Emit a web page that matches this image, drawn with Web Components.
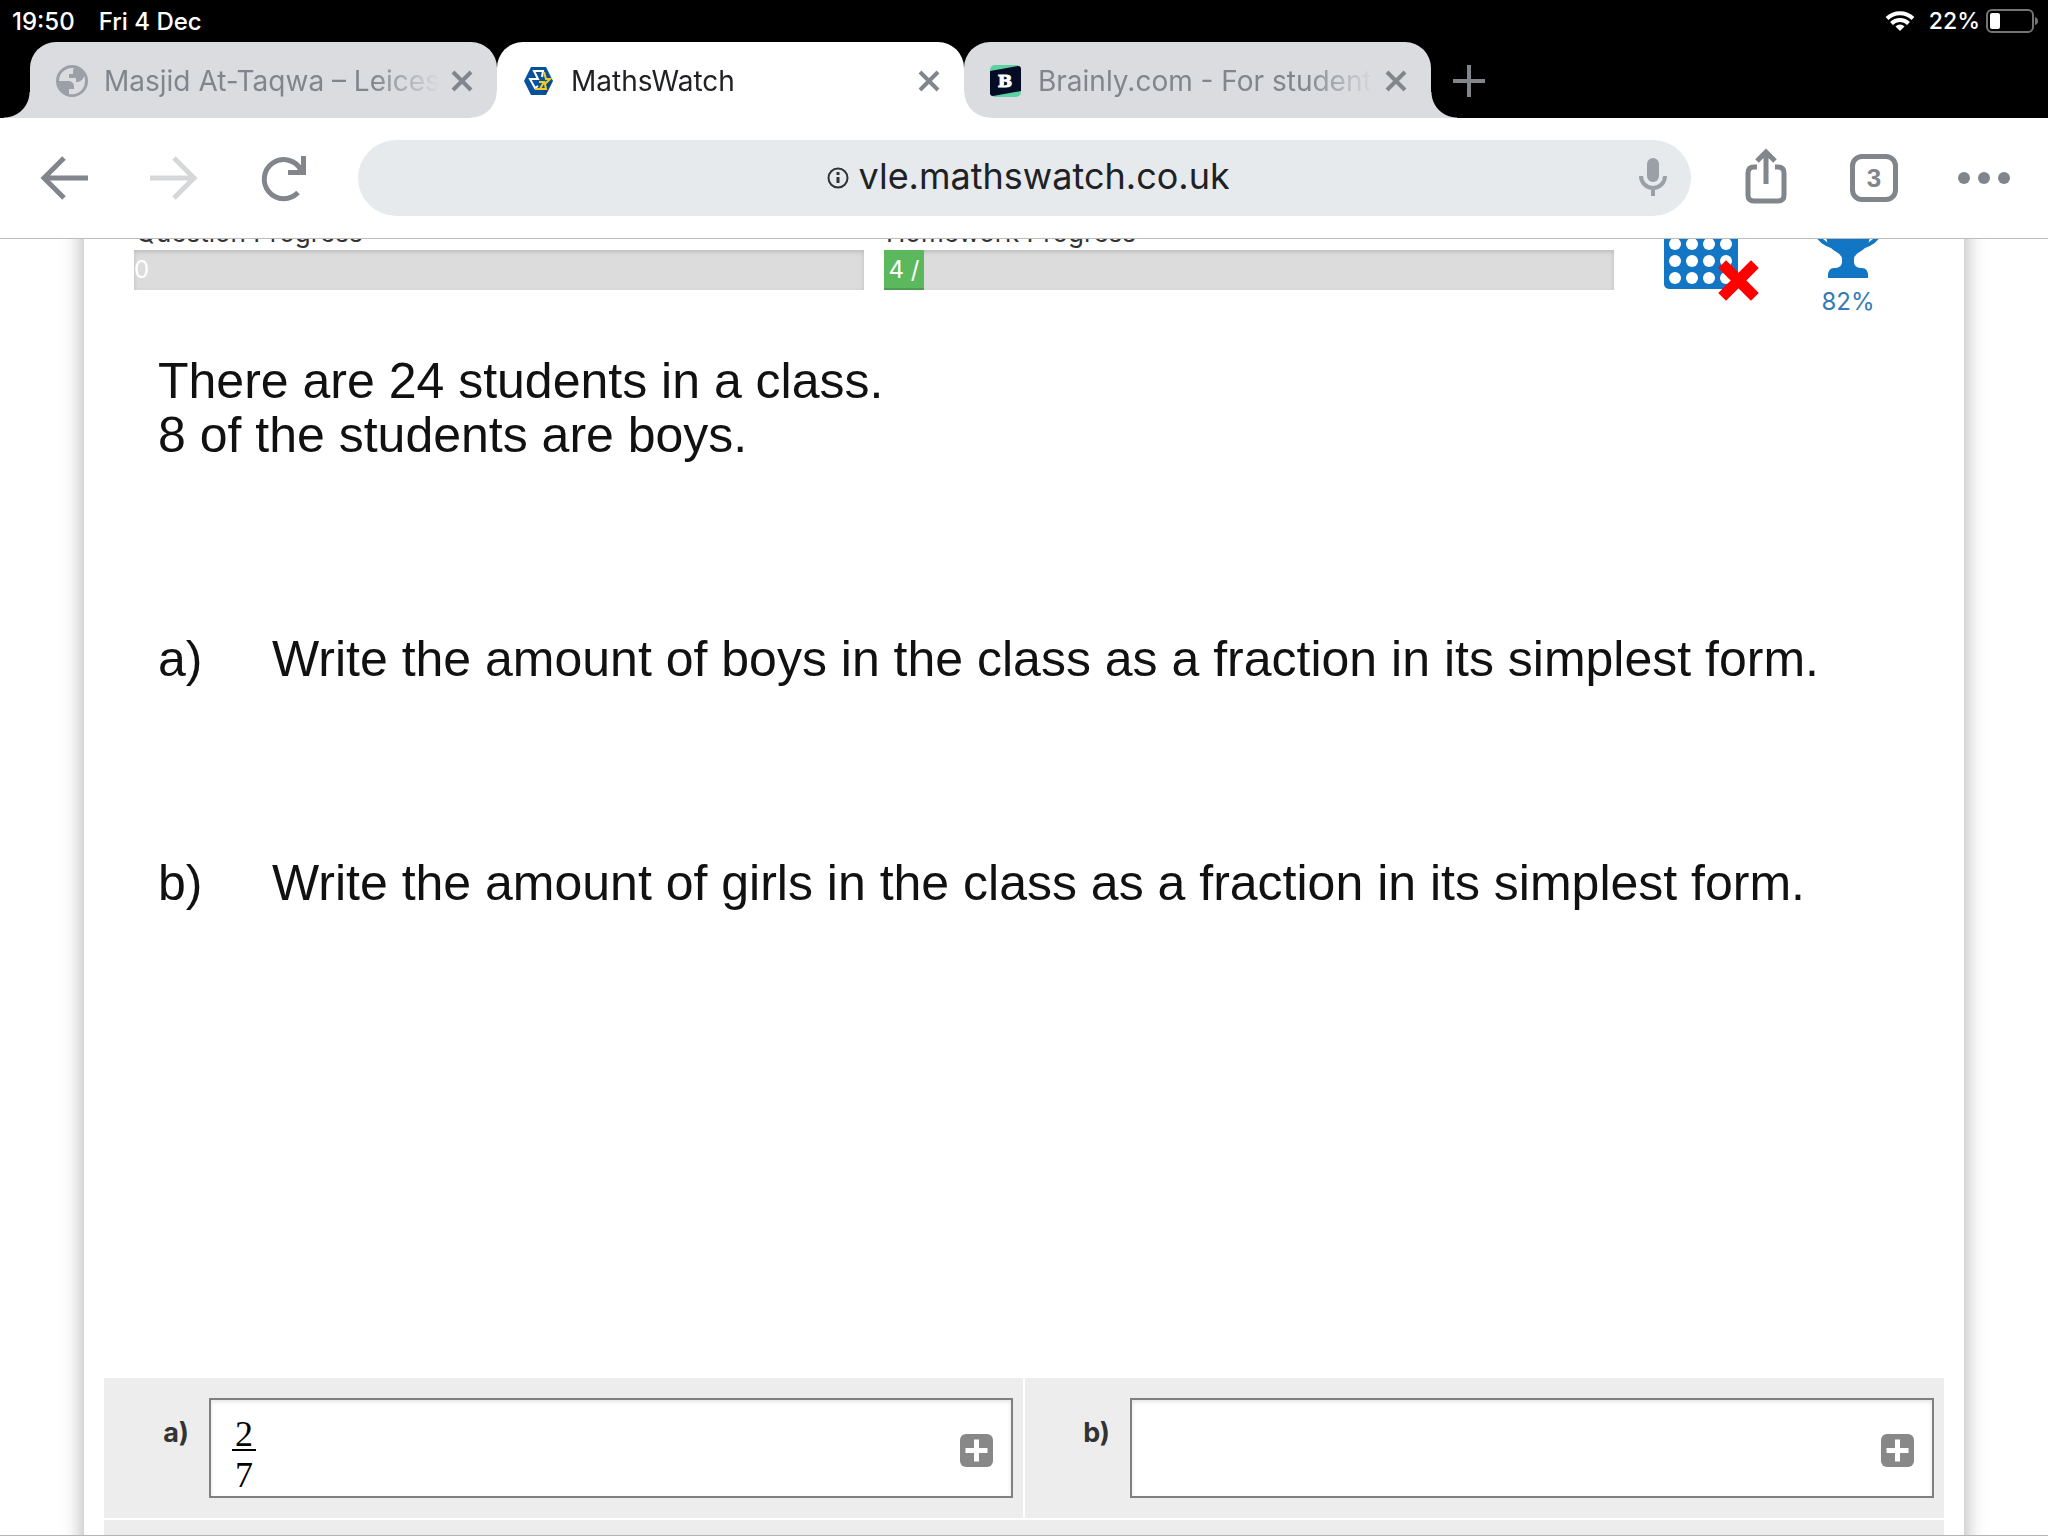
<!DOCTYPE html>
<html lang="en">
<head>
<meta charset="utf-8">
<meta name="viewport" content="width=device-width, initial-scale=1">
<title>MathsWatch</title>
<style>
  body {
    margin: 0;
    height: 100vh;
    display: flex;
    flex-direction: column;
    overflow: hidden;
    background: #fff;
    font-family: Inter, "Liberation Sans", sans-serif;
    color: #202124;
  }
</style>
</head>
<body>
  <status-bar time="19:50" date="Fri 4 Dec" battery="22"></status-bar>

  <tab-strip>
    <browser-tab label="Masjid At-Taqwa – Leices">
      <svg slot="icon" viewBox="0 0 32 32" width="32" height="32">
        <circle cx="16" cy="16" r="16" fill="#9aa0a6"/>
        <path d="M16 3a13 13 0 0 0-13 13h9c3 0 6 2 6 5v3h-5v5a13 13 0 0 0 16-13c0-2 0-3-1-5-1 4-4 6-8 6v-4h-7v-4h4V5l1-2z" fill="#dadce0"/>
      </svg>
    </browser-tab>
    <browser-tab label="MathsWatch" active>
      <svg slot="icon" viewBox="0 0 32 32" width="32" height="32">
        <path d="M8 2h15l7 14-7 14H8L1 16z" fill="#07529b"/>
        <path d="M20 28l4-11 4 1-5 10z" fill="#0a4780"/>
        <path d="M19 12l1-6h-9l4 8H7l5 9 3-2" fill="none" stroke="#fff" stroke-width="2"/>
        <path d="M21 7l2 7h4l-5 5 1 5H12M16 17h5l-4 7" fill="none" stroke="#f5cb24" stroke-width="2"/>
      </svg>
    </browser-tab>
    <browser-tab label="Brainly.com - For student">
      <svg slot="icon" viewBox="0 0 32 32" width="32" height="32">
        <rect y="0" width="31" height="32" rx="5" fill="#5ed1a3"/>
        <path d="M0 6L28 1q3 0 3 3v22L3 31q-3 0-3-3z" fill="#040b24"/>
        <text x="15" y="22" text-anchor="middle" font-family="DejaVu Serif, serif" font-weight="bold" font-size="17" fill="#fff" stroke="#fff">B</text>
      </svg>
    </browser-tab>
  </tab-strip>

  <browser-toolbar url="vle.mathswatch.co.uk" tabs="3"></browser-toolbar>

  <page-view>
    <page-header score="82%">
      <progress-meter label="Question Progress" text="0" value="0"></progress-meter>
      <progress-meter label="Homework Progress" text="4 /" value="5.5"></progress-meter>
    </page-header>

    <question-sheet>
      <span slot="intro">There are 24 students in a class.<br>8 of the students are boys.</span>
      <question-part name="a)">Write the amount of boys in the class as a fraction in its simplest form.</question-part>
      <question-part name="b)">Write the amount of girls in the class as a fraction in its simplest form.</question-part>
    </question-sheet>

    <answer-grid>
      <answer-field label="a)"><math-fraction top="2" bottom="7"></math-fraction></answer-field>
      <answer-field label="b)"></answer-field>
    </answer-grid>
  </page-view>

<script>
class StatusBar extends HTMLElement {
  constructor() {
    super();
    this.attachShadow({ mode: "open" });
    const level = this.getAttribute("battery");
    this.shadowRoot.innerHTML = `
    <style>
      :host {
        display: flex;
        align-items: center;
        gap: 24px;
        height: 42px;
        padding: 0 10px 0 12px;
        background: #000;
        color: #fff;
        font-size: 24px;
        font-weight: 500;
        box-sizing: border-box;
      }
      .right {
        display: flex;
        align-items: center;
        margin-left: auto;
      }
      .percent { margin: 0 6px 0 14px; font-size: 23px; }
      svg { display: block; }
    </style>
    <span>${this.getAttribute("time")}</span>
    <span>${this.getAttribute("date")}</span>
    <div class="right">
      <svg viewBox="0 0 30 22" width="30" height="22">
        <g fill="none" stroke="#fff" stroke-width="4">
          <path d="M2 8.500a18.500 18.500 0 0 1 26 0"/>
          <path d="M6.500 13.500a12 12 0 0 1 17 0"/>
        </g>
        <path d="M15 21l-4.500-4.600a6.500 6.500 0 0 1 9 0z" fill="#fff"/>
      </svg>
      <span class="percent">${level}%</span>
      <svg viewBox="0 0 52 24" width="52" height="24">
        <rect x="1" y="1" width="46" height="22" rx="5" fill="none" stroke="#757575" stroke-width="2"/>
        <rect x="4" y="4" width="10" height="16" rx="2" fill="#fff"/>
        <path d="M49 8q3 1 3 4t-3 4z" fill="#757575"/>
      </svg>
    </div>
    `;
  }
}
customElements.define("status-bar", StatusBar);

class TabStrip extends HTMLElement {
  constructor() {
    super();
    this.attachShadow({ mode: "open" });
    this.shadowRoot.innerHTML = `
    <style>
      :host {
        display: flex;
        height: 76px;
        padding-left: 30px;
        background: #000;
      }
      button {
        display: flex;
        align-items: center;
        padding: 2px 22px 0;
        border: 0;
        background: none;
      }
    </style>
    <slot></slot>
    <button aria-label="New tab">
      <svg viewBox="0 0 32 32" width="32" height="32"><path d="M16 0v32M0 16h32" stroke="#80868b" stroke-width="4"/></svg>
    </button>
    `;
  }
}
customElements.define("tab-strip", TabStrip);

class BrowserTab extends HTMLElement {
  constructor() {
    super();
    this.attachShadow({ mode: "open" });
    this.shadowRoot.innerHTML = `
    <style>
      :host {
        --tab-color: #dadce0;
        display: flex;
        align-items: center;
        position: relative;
        flex: 0 1 467px;
        min-width: 0;
        padding: 2px 21px 0 26px;
        box-sizing: border-box;
        border-radius: 26px 26px 0 0;
        background: var(--tab-color);
        color: #80868b;
      }
      :host([active]) {
        --tab-color: #fff;
        z-index: 1;
        color: #202124;
      }
      /* curved feet on both sides of the tab */
      :host::before, :host::after {
        content: "";
        position: absolute;
        bottom: 0;
        width: 26px;
        height: 26px;
      }
      :host::before {
        right: 100%;
        background: radial-gradient(circle at 0 0, transparent 25px, var(--tab-color) 26px);
      }
      :host::after {
        left: 100%;
        background: radial-gradient(circle at 100% 0, transparent 25px, var(--tab-color) 26px);
      }
      button {
        border: 0;
        padding: 0;
        background: none;
        font: inherit;
        color: inherit;
        display: flex;
        align-items: center;
      }
      .select {
        flex: 1;
        min-width: 0;
        gap: 16px;
      }
      .title {
        flex: 1;
        overflow: hidden;
        white-space: nowrap;
        text-align: left;
        font-size: 28px;
        line-height: 40px;
        -webkit-mask-image: linear-gradient(to left, transparent, #000 68px);
        mask-image: linear-gradient(to left, transparent, #000 68px);
      }
      .close { margin-left: 8px; }
    </style>
    <button class="select"><slot name="icon"></slot><span class="title">${this.getAttribute("label")}</span></button>
    <button class="close" aria-label="Close tab">
      <svg viewBox="0 0 28 28" width="28" height="28"><path d="M5 5l18 18M23 5L5 23" stroke="#80868b" stroke-width="4"/></svg>
    </button>
    `;
  }
}
customElements.define("browser-tab", BrowserTab);

class BrowserToolbar extends HTMLElement {
  constructor() {
    super();
    this.attachShadow({ mode: "open" });
    this.shadowRoot.innerHTML = `
    <style>
      :host {
        display: flex;
        align-items: center;
        height: 121px;
        padding: 0 38px 0 40px;
        box-sizing: border-box;
        border-bottom: 1px solid #bcbcbc;
        background: #fff;
      }
      button {
        display: flex;
        align-items: center;
        justify-content: center;
        flex: none;
        padding: 0;
        border: 0;
        background: none;
        color: #80868b;
      }
      .nav {
        display: flex;
        gap: 62px;
        margin-right: 50px;
      }
      .omnibox {
        flex: 1;
        display: flex;
        align-items: center;
        height: 76px;
        padding: 0 22px 0 60px;
        border-radius: 38px;
        background: #e6eaed;
      }
      .address {
        flex: 1;
        display: flex;
        align-items: center;
        justify-content: center;
        gap: 10px;
      }
      input {
        width: 370px;
        padding: 0 0 4px;
        border: 0;
        outline: 0;
        background: none;
        font: 36px Inter, sans-serif;
        color: #202124;
      }
      .actions {
        display: flex;
        align-items: center;
        gap: 60px;
        margin-left: 51px;
      }
      .share { padding-bottom: 4px; }
      .count {
        width: 48px;
        height: 48px;
        box-sizing: border-box;
        border: 5px solid #80868b;
        border-radius: 12px;
        font: bold 26px "Liberation Sans", sans-serif;
      }
    </style>
    <div class="nav">
      <button aria-label="Back">
        <svg viewBox="0 0 48 48" width="48" height="48"><path d="M48 24H4M24 4L4 24l20 20" fill="none" stroke="currentColor" stroke-width="5"/></svg>
      </button>
      <button aria-label="Forward" disabled>
        <svg viewBox="0 0 48 48" width="48" height="48"><path d="M0 24h44M24 4l20 20-20 20" fill="none" stroke="#d6d7d8" stroke-width="5"/></svg>
      </button>
      <button aria-label="Reload">
        <svg viewBox="0 0 48 48" width="48" height="48"><path d="M38 38.500A19.500 19.500 0 1 1 41 16" fill="none" stroke="currentColor" stroke-width="5"/><path d="M43.500 2v16.500H28" fill="none" stroke="currentColor" stroke-width="5"/></svg>
      </button>
    </div>
    <div class="omnibox">
      <div class="address">
        <svg viewBox="0 0 22 22" width="22" height="22"><circle cx="11" cy="11" r="9.500" fill="none" stroke="#303236" stroke-width="2"/><path d="M11 10v6M11 5v3" stroke="#303236" stroke-width="3"/></svg>
        <input type="text" aria-label="Address" value="${this.getAttribute("url")}">
      </div>
      <button aria-label="Voice search">
        <svg viewBox="0 0 32 40" width="32" height="40"><rect x="10" y="0" width="12" height="24" rx="6" fill="#9aa0a6"/><path d="M4 18a12 12 0 0 0 24 0M16 30v8" fill="none" stroke="#9aa0a6" stroke-width="4"/></svg>
      </button>
    </div>
    <div class="actions">
      <button class="share" aria-label="Share">
        <svg viewBox="0 0 48 56" width="48" height="56"><path d="M15 19H12q-6 0-6 6v22q0 6 6 6h24q6 0 6-6V25q0-6-6-6h-3M24 36V5M15 13l9-9 9 9" fill="none" stroke="currentColor" stroke-width="5"/></svg>
      </button>
      <button class="count" aria-label="Open tabs">${this.getAttribute("tabs")}</button>
      <button aria-label="Menu">
        <svg viewBox="0 0 52 12" width="52" height="12" fill="currentColor"><circle cx="6" cy="6" r="6"/><circle cx="26" cy="6" r="6"/><circle cx="46" cy="6" r="6"/></svg>
      </button>
    </div>
    `;
  }
}
customElements.define("browser-toolbar", BrowserToolbar);

class PageView extends HTMLElement {
  constructor() {
    super();
    this.attachShadow({ mode: "open" });
    this.shadowRoot.innerHTML = `
    <style>
      :host {
        flex: 1;
        display: block;
        min-height: 0;
        overflow: hidden;
        border-bottom: 1px solid #b4b4b4;
      }
      /* the page is scrolled down a little under the toolbar */
      main {
        min-height: 100%;
        margin: -40px 84px 0;
        box-shadow: 0 0 20px rgba(0, 0, 0, 0.35);
        background: #fff;
      }
    </style>
    <main><slot></slot></main>
    `;
  }
}
customElements.define("page-view", PageView);

class PageHeader extends HTMLElement {
  constructor() {
    super();
    this.attachShadow({ mode: "open" });
    this.shadowRoot.innerHTML = `
    <style>
      :host {
        display: flex;
        align-items: flex-start;
        gap: 20px;
        padding: 0 72px 0 50px;
      }
      .tools {
        display: flex;
        gap: 42px;
        margin-left: 28px;
      }
      a {
        display: flex;
        flex-direction: column;
        align-items: center;
        font-size: 24px;
        line-height: 28px;
        color: #337ab7;
        text-decoration: none;
      }
      svg { display: block; }
      .score svg { margin-bottom: 10px; }
    </style>
    <slot></slot>
    <div class="tools">
      <a href="#" aria-label="Calculator not allowed">
        <svg viewBox="0 0 100 104" width="100" height="104">
          <rect x="2" y="0" width="74" height="90" rx="5" fill="#1276c4"/>
          <g fill="#fff">
            <rect x="9" y="8" width="60" height="24"/>
            <circle cx="13" cy="45" r="6"/><circle cx="30" cy="45" r="6"/><circle cx="47" cy="45" r="6"/><circle cx="64" cy="45" r="6"/>
            <circle cx="13" cy="62" r="6"/><circle cx="30" cy="62" r="6"/><circle cx="47" cy="62" r="6"/><circle cx="64" cy="62" r="6"/>
            <circle cx="13" cy="79" r="6"/><circle cx="30" cy="79" r="6"/><circle cx="47" cy="79" r="6"/><circle cx="64" cy="79" r="6"/>
          </g>
          <path d="M64 69l25 25M89 69L64 94" stroke="#f00" stroke-width="11" stroke-linecap="square"/>
        </svg>
      </a>
      <a class="score" href="#">
        <svg viewBox="0 0 88 79" width="88" height="79" fill="#1276c4">
          <path d="M22 4h44v32q0 12-12 18-4 3-4 6v3q0 5 6 6h2q6 0 6 8v2H24v-2q0-8 6-8h2q6-1 6-6v-3q0-3-4-6-12-6-12-18z"/>
          <path d="M22 14H8q0 32 28 35M66 14h14q0 32-28 35" fill="none" stroke="#1276c4" stroke-width="4"/>
        </svg>
        ${this.getAttribute("score")}
      </a>
    </div>
    `;
  }
}
customElements.define("page-header", PageHeader);

class ProgressMeter extends HTMLElement {
  constructor() {
    super();
    this.attachShadow({ mode: "open" });
    const value = this.getAttribute("value");
    this.shadowRoot.innerHTML = `
    <style>
      :host {
        flex: 1;
        display: block;
        min-width: 0;
        color: #333;
      }
      .label {
        display: block;
        height: 51px;
        padding: 16px 0 0 2px;
        box-sizing: border-box;
        font-size: 26px;
        line-height: 36px;
      }
      .track {
        height: 40px;
        background: #dcdcdc;
        box-shadow: inset 0 2px 4px rgba(0, 0, 0, 0.15);
      }
      .fill {
        height: 40px;
        font-size: 24px;
        line-height: 40px;
        text-align: center;
        white-space: nowrap;
        color: #fff;
      }
      .fill.on {
        background: #5cb85c;
        box-shadow: inset 0 -2px 0 rgba(0, 0, 0, 0.15);
      }
    </style>
    <span class="label" id="label">${this.getAttribute("label")}</span>
    <div class="track" role="progressbar" aria-labelledby="label" aria-valuenow="${value}">
      <div class="fill ${value > 0 ? "on" : ""}" style="width: ${value > 0 ? value + "%" : "14px"}">${this.getAttribute("text")}</div>
    </div>
    `;
  }
}
customElements.define("progress-meter", ProgressMeter);

class QuestionSheet extends HTMLElement {
  constructor() {
    super();
    this.attachShadow({ mode: "open" });
    this.shadowRoot.innerHTML = `
    <style>
      :host {
        display: flex;
        flex-direction: column;
        gap: 170px;
        min-height: 1024px;
        padding: 38px 74px 0;
        font-family: "Liberation Sans", Arial, sans-serif;
        font-size: 50px;
        line-height: 54px;
        color: #111;
      }
    </style>
    <slot name="intro"></slot>
    <slot></slot>
    `;
  }
}
customElements.define("question-sheet", QuestionSheet);

class QuestionPart extends HTMLElement {
  constructor() {
    super();
    this.attachShadow({ mode: "open" });
    this.shadowRoot.innerHTML = `
    <style>
      :host { display: flex; }
      .name { flex: 0 0 114px; }
    </style>
    <span class="name">${this.getAttribute("name")}</span>
    <span><slot></slot></span>
    `;
  }
}
customElements.define("question-part", QuestionPart);

class AnswerGrid extends HTMLElement {
  constructor() {
    super();
    this.attachShadow({ mode: "open" });
    this.shadowRoot.innerHTML = `
    <style>
      :host {
        display: grid;
        grid-template-columns: 1fr 1fr;
        gap: 2px;
        padding: 0 20px;
      }
      .footer {
        grid-column: 1 / -1;
        height: 80px;
        background: #ededed;
      }
    </style>
    <slot></slot>
    <div class="footer"></div>
    `;
  }
}
customElements.define("answer-grid", AnswerGrid);

class AnswerField extends HTMLElement {
  constructor() {
    super();
    this.attachShadow({ mode: "open" });
    this.shadowRoot.innerHTML = `
    <style>
      :host {
        display: flex;
        padding: 20px 10px 20px 0;
        background: #ededed;
      }
      label {
        flex: 0 0 85px;
        margin-right: 20px;
        padding-top: 17px;
        text-align: right;
        font-size: 27px;
        line-height: 36px;
        font-weight: bold;
        color: #333;
      }
      .box {
        flex: 1;
        display: flex;
        align-items: center;
        height: 100px;
        padding: 0 18px 0 21px;
        box-sizing: border-box;
        border: 2px solid #808080;
        background: #fff;
        box-shadow: inset 0 2px 4px rgba(0, 0, 0, 0.1);
      }
      input {
        flex: 1;
        min-width: 0;
        border: 0;
        outline: 0;
        background: none;
        font: 36px "Liberation Serif", serif;
      }
      button {
        padding: 4px 0 0;
        border: 0;
        background: none;
      }
      svg { display: block; }
    </style>
    <label for="answer">${this.getAttribute("label")}</label>
    <div class="box">
      <slot></slot>
      <input id="answer" type="text">
      <button aria-label="Insert symbol">
        <svg viewBox="0 0 33 33" width="33" height="33">
          <rect width="33" height="33" rx="6" fill="#888"/>
          <path d="M16.500 8v17M8 16.500h17" stroke="#fff" stroke-width="5" stroke-linecap="square"/>
        </svg>
      </button>
    </div>
    `;
  }
}
customElements.define("answer-field", AnswerField);

class MathFraction extends HTMLElement {
  constructor() {
    super();
    this.attachShadow({ mode: "open" });
    this.shadowRoot.innerHTML = `
    <style>
      :host {
        display: flex;
        flex-direction: column;
        align-self: flex-start;
        width: 24px;
        padding-top: 19px;
        text-align: center;
        font-family: "Liberation Serif", serif;
        font-size: 36px;
        line-height: 36px;
        color: #000;
      }
      .top {
        line-height: 30px;
        border-bottom: 2px solid #000;
      }
      .bottom { padding-top: 6px; }
    </style>
    <span class="top">${this.getAttribute("top")}</span>
    <span class="bottom">${this.getAttribute("bottom")}</span>
    `;
  }
}
customElements.define("math-fraction", MathFraction);
</script>
</body>
</html>
